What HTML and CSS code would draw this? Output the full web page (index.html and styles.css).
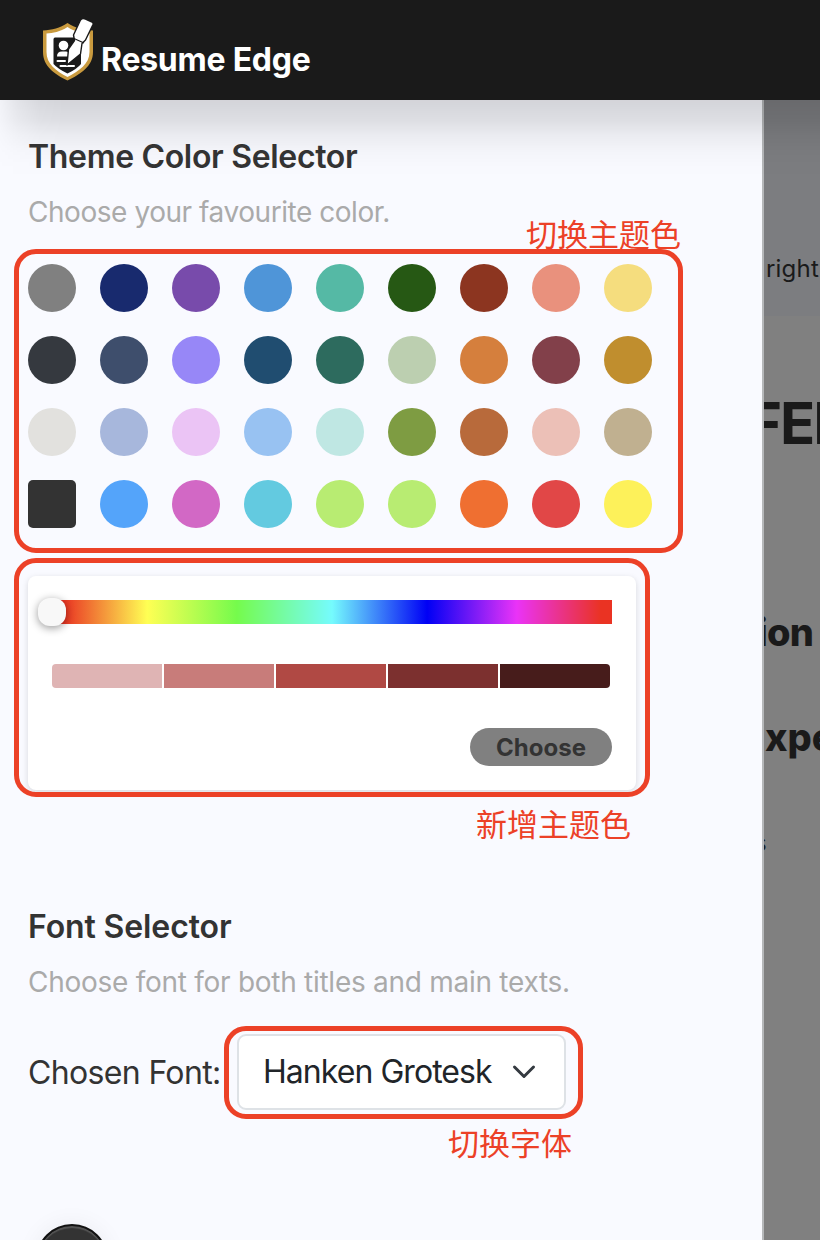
FILE: index.html
```html
<!DOCTYPE html>
<html lang="en">
<head>
<meta charset="utf-8">
<title>Resume Edge</title>
<link rel="stylesheet" href="styles.css">
</head>
<body>
<header class="topbar">
  <svg class="logo" width="52" height="64" viewBox="0 0 52 64" aria-hidden="true">
    <path d="M25.500 5 C18 10 10 12 1 12.500 V34 C1 48 12 56 25.500 62.500 C39 56 51 48 51 34 V12.500 C42 12 33 10 25.500 5Z" fill="#c99a3e"/>
    <path d="M25.500 9 C18 14 11 15 4.500 15.500 V34 C4.500 46 14 53 25.500 59 C37 53 47.500 46 47.500 34 V15.500 C40 15 33 14 25.500 9Z" fill="#fff"/>
    <path d="M13 19.500 H37 Q39 19.500 39 21.500 V46 Q35 51 25.500 55.500 Q16 51 11.500 46 V21.500 Q11.500 19.500 13 19.500Z" fill="#1a1a1a"/>
    <circle cx="21.500" cy="27.500" r="4.800" fill="#fff"/>
    <path d="M15 38.500 Q15 33.500 20 33.500 H24 Q27 33.500 27 38.500Z" fill="#fff"/>
    <path d="M15.500 43 H23 M18.500 48 H32" stroke="#fff" stroke-width="2" stroke-linecap="round"/>
    <path d="M43.500 1 L50 4 Q51.500 5 51 6.500 L43.500 22 L40 25.500 L38.500 36 L25 47 L26.500 31 L32.500 22.500 L31.500 17 L38.500 2 Q40 0 43.500 1Z" fill="#fff" stroke="#1a1a1a" stroke-width="1.400" stroke-linejoin="round"/>
    <path d="M32 20.500 L42 25" stroke="#1a1a1a" stroke-width="1.200"/>
  </svg>
  <span class="brand">Resume Edge</span>
</header>
<main class="stage">
  <section class="panel">
    <h2 class="title title-theme">Theme Color Selector</h2>
    <p class="hint hint-theme">Choose your favourite color.</p>
    <div class="swatches">
      <i class="sw c1"></i><i class="sw c2"></i><i class="sw c3"></i><i class="sw c4"></i><i class="sw c5"></i><i class="sw c6"></i><i class="sw c7"></i><i class="sw c8"></i><i class="sw c9"></i>
      <i class="sw c10"></i><i class="sw c11"></i><i class="sw c12"></i><i class="sw c13"></i><i class="sw c14"></i><i class="sw c15"></i><i class="sw c16"></i><i class="sw c17"></i><i class="sw c18"></i>
      <i class="sw c19"></i><i class="sw c20"></i><i class="sw c21"></i><i class="sw c22"></i><i class="sw c23"></i><i class="sw c24"></i><i class="sw c25"></i><i class="sw c26"></i><i class="sw c27"></i>
      <i class="sw c28 selected"></i><i class="sw c29"></i><i class="sw c30"></i><i class="sw c31"></i><i class="sw c32"></i><i class="sw c33"></i><i class="sw c34"></i><i class="sw c35"></i><i class="sw c36"></i>
    </div>
    <div class="picker">
      <div class="hue"><span class="thumb"></span></div>
      <div class="shades"><i class="s1"></i><i class="s2"></i><i class="s3"></i><i class="s4"></i><i class="s5"></i></div>
      <button class="choose">Choose</button>
    </div>
    <h2 class="title title-font">Font Selector</h2>
    <p class="hint hint-font">Choose font for both titles and main texts.</p>
    <div class="font-row">
      <span class="font-label">Chosen Font:</span>
      <div class="select">
        <span class="select-value">Hanken Grotesk</span>
        <svg width="24" height="16" viewBox="0 0 24 16" aria-hidden="true"><path d="M2.500 3 L12 12.500 L21.500 3" fill="none" stroke="#343a40" stroke-width="3" stroke-linecap="round" stroke-linejoin="round"/></svg>
      </div>
    </div>
    <div class="fab"></div>
  </section>
  <aside class="preview">
    <div class="preview-top"><span class="pv-right">right</span></div>
    <div class="pv pv-name">FER</div>
    <div class="pv pv-ion">ion</div>
    <div class="pv pv-exp">xpe</div>
    <div class="pv pv-s">s</div>
  </aside>
</main>
<div class="mark mark-swatches"></div>
<div class="mark mark-picker"></div>
<div class="mark mark-font"></div>
<span class="note note-swatches">切换主题色</span>
<span class="note note-picker">新增主题色</span>
<span class="note note-font">切换字体</span>
</body>
</html>
```
FILE: styles.css
```css
* { box-sizing: border-box; }
body {
  margin: 0;
  width: 820px;
  height: 1240px;
  position: relative;
  overflow: hidden;
  background: #f9faff;
  font-family: Inter, "Liberation Sans", sans-serif;
  color: #333;
}
.topbar {
  height: 100px;
  padding: 18px 0 0 42px;
  display: flex;
  align-items: flex-start;
  gap: 7px;
  background: #1a1a1a;
}
.logo { flex: none; }
.brand {
  margin-top: 21px;
  line-height: 41px;
  font-size: 32px;
  font-weight: 700;
  letter-spacing: -0.25px;
  color: #fff;
  white-space: nowrap;
}
.stage {
  display: grid;
  grid-template-columns: 764px 56px;
  height: 1140px;
  position: relative;
}
/* soft shadow cast by the top bar */
.stage::before {
  content: "";
  position: absolute;
  z-index: 1;
  inset: 0 0 auto 0;
  height: 80px;
  background: linear-gradient(to bottom, rgba(0, 0, 0, 0.15) 0, rgba(0, 0, 0, 0.108) 20px, rgba(0, 0, 0, 0.055) 36px, rgba(0, 0, 0, 0.02) 53px, rgba(0, 0, 0, 0.004) 68px, transparent 80px);
  -webkit-mask-image: linear-gradient(to right, rgba(0, 0, 0, 0.2) 0, rgba(0, 0, 0, 0.6) 18px, rgba(0, 0, 0, 0.9) 40px, #000 64px);
  mask-image: linear-gradient(to right, rgba(0, 0, 0, 0.2) 0, rgba(0, 0, 0, 0.6) 18px, rgba(0, 0, 0, 0.9) 40px, #000 64px);
}
.panel {
  border-right: 2px solid #b6b8ba;
  background: #f9faff;
  padding-left: 28px;
  overflow: hidden;
}
.title, .hint { margin: 0; line-height: 40px; white-space: nowrap; position: relative; z-index: 2; }
.title { font-size: 32px; font-weight: 600; }
.title-theme { margin-top: 37px; letter-spacing: -0.33px; }
.title-font { margin-top: 117px; letter-spacing: -0.12px; }
.hint { margin-top: 15px; font-size: 28px; color: #aaa; }
.hint-theme { letter-spacing: -0.45px; }
.hint-font { letter-spacing: -0.27px; }
.swatches {
  margin-top: 32px;
  display: grid;
  grid-template-columns: repeat(9, 48px);
  gap: 24px;
}
.sw { width: 48px; height: 48px; border-radius: 50%; }
.selected { border-radius: 5px; }
.c1 { background: #808080; } .c2 { background: #182a6e; } .c3 { background: #784bab; }
.c4 { background: #4f95d8; } .c5 { background: #55b9a5; } .c6 { background: #265814; }
.c7 { background: #8c3520; } .c8 { background: #e9917d; } .c9 { background: #f5dd7e; }
.c10 { background: #35393f; } .c11 { background: #3e4e6c; } .c12 { background: #9787f7; }
.c13 { background: #204d70; } .c14 { background: #2d6b5e; } .c15 { background: #bccfb0; }
.c16 { background: #d57f3d; } .c17 { background: #82404a; } .c18 { background: #c08e2e; }
.c19 { background: #e2e1de; } .c20 { background: #a7b7dc; } .c21 { background: #ebc4f5; }
.c22 { background: #98c2f2; } .c23 { background: #bfe7e3; } .c24 { background: #7e9c42; }
.c25 { background: #b86a3b; } .c26 { background: #ecc0b7; } .c27 { background: #c0b090; }
.c28 { background: #333; } .c29 { background: #54a4fa; } .c30 { background: #d268c5; }
.c31 { background: #63cae0; } .c32, .c33 { background: #b8ec72; }
.c34 { background: #ef6f31; } .c35 { background: #e14747; } .c36 { background: #fdf15a; }
.picker {
  width: 608px;
  height: 214px;
  margin-top: 48px;
  padding: 24px;
  border-radius: 8px;
  background: #fff;
  box-shadow: 0 2px 6px rgba(0, 0, 0, 0.14);
  display: flex;
  flex-direction: column;
}
.hue {
  position: relative;
  height: 24px;
  background: linear-gradient(to right, #ea3323 0%, #ea3323 2%, #ffff54 17%, #75fb4c 33%, #75fbfd 50%, #0000f5 67%, #ea33f7 83%, #ea3323 98%);
}
.thumb {
  position: absolute;
  left: -14px;
  top: -2px;
  width: 28px;
  height: 28px;
  border-radius: 12px;
  background: #f8f8f8;
  box-shadow: 0 2px 8px rgba(0, 0, 0, 0.4);
}
.shades {
  margin-top: 40px;
  width: 558px;
  height: 24px;
  display: grid;
  grid-template-columns: repeat(5, 1fr);
  gap: 2px;
  border-radius: 4px;
  overflow: hidden;
}
.s1 { background: #dfb4b4; } .s2 { background: #c87c7a; } .s3 { background: #b04944; }
.s4 { background: #7c302f; } .s5 { background: #471c1b; }
.choose {
  align-self: flex-end;
  margin-top: 40px;
  width: 142px;
  height: 38px;
  padding: 1px 0 0;
  border: 0;
  border-radius: 19px;
  background: #808080;
  color: #333;
  font: 700 24px/37px Inter, sans-serif;
}
.font-row {
  margin-top: 32px;
  height: 76px;
  display: flex;
  align-items: center;
}
.font-label { width: 209px; font-size: 32px; white-space: nowrap; letter-spacing: -0.65px; }
.select {
  width: 329px;
  height: 76px;
  padding: 0 28px 0 24px;
  display: flex;
  align-items: center;
  justify-content: space-between;
  border: 2px solid #dee2e6;
  border-radius: 9px;
  background: #fff;
}
.select-value { font-size: 32px; color: #212529; white-space: nowrap; letter-spacing: -0.95px; line-height: 40px; }
.fab {
  width: 72px;
  height: 72px;
  margin: 114px 0 0 8px;
  border-radius: 50%;
  border: 2px solid #111;
  background: #333;
  box-shadow: inset 0 2px 1px #555, 0 0 24px rgba(0, 0, 0, 0.06);
}
.preview { background: #808080; overflow: hidden; color: #1a1a1a; }
.preview-top { height: 216px; padding: 153px 0 0 2px; background: #7c7d80; }
.pv-right { display: block; font-size: 24px; line-height: 32px; letter-spacing: 0.2px; }
.pv { white-space: nowrap; font-weight: 700; }
.pv-name { margin: 72px 0 0 -16px; font-size: 58px; line-height: 70px; letter-spacing: -2px; }
.pv-ion { margin: 149px 0 0 -7px; font-size: 38px; line-height: 50px; font-weight: 800; letter-spacing: -0.8px; }
.pv-exp { margin: 55px 0 0 1px; font-size: 38px; line-height: 50px; font-weight: 800; }
.pv-s { margin: 65px 0 0 -10px; font-size: 24px; line-height: 32px; font-weight: 400; }
/* review annotations drawn over the page */
.mark { position: absolute; z-index: 3; border: 5px solid #ec4127; border-radius: 22px; }
.mark-swatches { left: 14px; top: 249px; width: 669px; height: 304px; }
.mark-picker { left: 14px; top: 558px; width: 636px; height: 239px; }
.mark-font { left: 224px; top: 1026px; width: 359px; height: 93px; }
.note {
  position: absolute;
  z-index: 4;
  font: 400 31px/40px "Noto Sans CJK SC", sans-serif;
  color: #ec4127;
  white-space: nowrap;
}
.note-swatches { left: 526px; top: 213px; }
.note-picker { left: 476px; top: 803px; }
.note-font { left: 448px; top: 1122px; }
```
